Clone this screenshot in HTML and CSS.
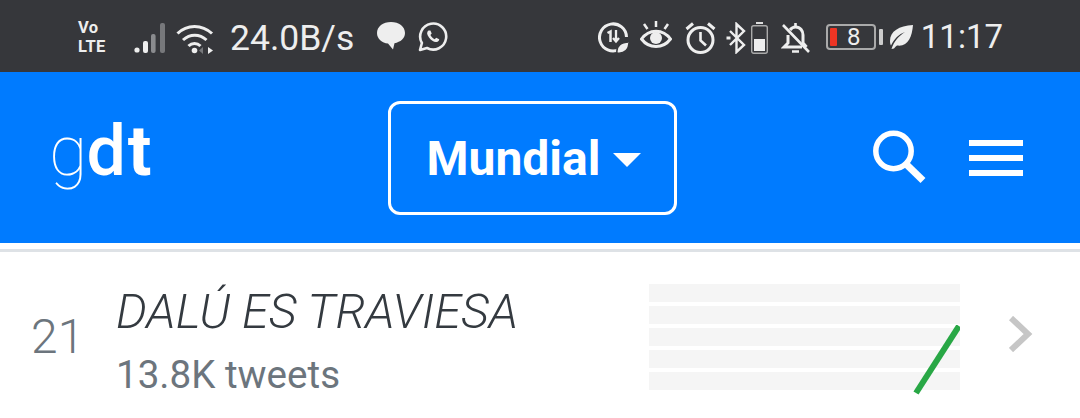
FILE: index.html
```html
<!DOCTYPE html>
<html lang="es">
<head>
<meta charset="utf-8">
<title>gdt</title>
<link rel="stylesheet" href="styles.css">
</head>
<body>
<div class="status">
  <div class="status-left">
    <div class="volte"><span>Vo</span><span>LTE</span></div>
    <svg class="i-signal" width="34" height="32" viewBox="0 0 34 32">
      <circle cx="3" cy="28" r="2.6" fill="#eee"/>
      <rect x="9" y="19" width="5" height="12" rx="2" fill="#eee"/>
      <rect x="17" y="12" width="4.6" height="19" rx="2" fill="#8a8b8e"/>
      <rect x="26" y="1" width="5" height="30" rx="2" fill="#77787b"/>
    </svg>
    <svg class="i-wifi" width="38" height="32" viewBox="0 0 38 32" fill="none" stroke="#eee" stroke-width="3">
      <path d="M1.5 10.5C11 1 26 1 36 10.500"/>
      <path d="M7 17C14 10.500 23.500 10.500 30.500 17"/>
      <path d="M12.500 23C16 19.500 21 19.500 24.500 23"/>
      <circle cx="18.500" cy="27.500" r="2.800" fill="#eee" stroke="none"/>
      <path d="M32 24v7l5-3.500z" fill="#eee" stroke="none"/>
      <path d="M27 24v7l-4-3.500z" fill="#77787b" stroke="none"/>
    </svg>
    <span class="speed">24.0B/s</span>
    <svg class="i-chat" width="28" height="28" viewBox="0 0 28 28">
      <path d="M14 0C6 0 0 4.500 0 11c0 6 5 10 11 10.500l5 6 1.500-6.300C23.500 20 28 16.500 28 11 28 4.500 22 0 14 0z" fill="#eee"/>
    </svg>
    <svg class="i-wa" width="30" height="30" viewBox="0 0 30 30" fill="none" stroke="#eee" stroke-width="2.600">
      <path d="M2 28l1.900-7A13 13 0 1 1 9 26z" stroke-linejoin="round"/>
      <path d="M10.500 8.500c-2 1.500-1.800 4 .5 7 2.300 3 5 4.800 7.500 4.500 1.700-.2 2.700-1.300 2.700-2.700l-3-1.500-1.500 1.500c-1.700-.7-3.500-2.500-4.300-4.300l1.300-1.500-1.300-3z" fill="#eee" stroke="none"/>
    </svg>
  </div>
  <div class="status-right">
    <svg class="i-saver" width="31" height="32" viewBox="0 0 31 32" fill="none" stroke="#eee" stroke-width="3">
      <path d="M21 27.500A13.500 13.500 0 1 1 28.500 15"/>
      <path d="M9.500 11l3-1.500V20" stroke-width="2.500"/>
      <path d="M18 8v11M15 16l3 3.500 3-3.500" stroke-width="2.300"/>
      <path d="M19 31c-1-7 4-11 12-11 0 7-4 12-12 11z" fill="#eee" stroke="#36373b" stroke-width="1.500"/>
    </svg>
    <svg class="i-eye" width="32" height="30" viewBox="0 0 32 30" fill="none" stroke="#eee" stroke-width="3">
      <path d="M1.500 18C9 7.500 23 7.500 30.500 18 23 28 9 28 1.500 18z"/>
      <circle cx="16" cy="17" r="6" fill="#eee" stroke="none"/>
      <path d="M16 0v6M4 3l3.500 5M28 3l-3.500 5" stroke-width="2.500"/>
    </svg>
    <svg class="i-alarm" width="31" height="32" viewBox="0 0 31 32" fill="none" stroke="#eee" stroke-width="3">
      <circle cx="15.500" cy="18" r="12.500"/>
      <path d="M15.500 10v8.500l5.500 5" stroke-width="2.600"/>
      <path d="M1.500 7L8 1.500M29.500 7L23 1.500"/>
    </svg>
    <svg class="i-bt" width="22" height="32" viewBox="0 0 22 32" fill="none" stroke="#eee" stroke-width="2.400">
      <path d="M4 9l14 14-7.500 7V2L18 9 4 23"/>
      <path d="M0.500 16h4" stroke-width="3"/>
    </svg>
    <svg class="i-bat" width="17" height="32" viewBox="0 0 17 32">
      <rect x="5" y="0" width="7" height="2" fill="#ddd"/>
      <rect x="0.700" y="3.700" width="15.600" height="27.600" rx="2" fill="none" stroke="#aaa" stroke-width="1.400"/>
      <rect x="3" y="17" width="11" height="12" fill="#eee"/>
    </svg>
    <svg class="i-bell" width="29" height="32" viewBox="0 0 29 32" fill="none" stroke="#eee" stroke-width="3">
      <path d="M9 8c1.500-2 3-3 5.500-3 5 0 7.500 4 7.500 8v8l3.500 4"/>
      <path d="M7 13v8l-4 4h18"/>
      <path d="M14.500 1v3M11 29.500h7M2 3l26 27" stroke-width="2.600"/>
    </svg>
    <div class="battery">
      <div class="battery-body"><span class="battery-fill"></span><span class="battery-num">8</span></div>
      <span class="battery-tip"></span>
    </div>
    <svg class="i-leaf" width="24" height="24" viewBox="0 0 24 24">
      <path d="M24 0C10 1 1 6 1 16c0 2 .5 3.500 1 4.500C5 14 10 9 16 7 10 11 5 16 2.500 24L5 23.500C6 22 7 21 8 20.500 19 22 23 12 24 0z" fill="#eee"/>
    </svg>
    <span class="clock">11:17</span>
  </div>
</div>

<header class="nav">
  <a class="brand"><span class="brand-g">g</span><span class="brand-d">d</span><span class="brand-t">t</span></a>
  <button class="select"><span>Mundial</span><span class="caret"></span></button>
  <div class="nav-actions">
    <svg class="i-search" width="54" height="54" viewBox="0 0 54 54" fill="none" stroke="#fff">
      <circle cx="20.500" cy="21" r="17.700" stroke-width="5.500"/>
      <path d="M33 34l17 16.500" stroke-width="7"/>
    </svg>
    <div class="burger"><span></span><span></span><span></span></div>
  </div>
</header>

<main class="list">
  <div class="row">
    <span class="rank">21</span>
    <div class="info">
      <div class="title">DALÚ ES TRAVIESA</div>
      <div class="count">13.8K tweets</div>
    </div>
    <div class="spark">
      <span></span><span></span><span></span><span></span><span></span>
      <svg class="spark-line" width="50" height="70" viewBox="0 0 50 70">
        <path d="M49 1L6 68" stroke="#28a745" stroke-width="6" fill="none"/>
      </svg>
    </div>
    <svg class="chevron" width="24" height="36" viewBox="0 0 24 36" fill="none">
      <path d="M2 2l17 16L2 34" stroke="#c6c6c6" stroke-width="6"/>
    </svg>
  </div>
</main>
</body>
</html>
```
FILE: styles.css
```css
* { box-sizing: border-box; }
html, body { margin: 0; padding: 0; }
body {
  width: 1080px;
  height: 418px;
  overflow: hidden;
  background: #fff;
  font-family: Roboto, "Liberation Sans", sans-serif;
}

/* Status bar */
.status {
  height: 72px;
  background: #36373b;
  color: #eee;
  display: flex;
  justify-content: space-between;
  align-items: center;
  padding: 0 77px 0 78px;
}
.status-left, .status-right { display: flex; align-items: center; }
.volte {
  display: flex;
  flex-direction: column;
  width: 28px;
  font-size: 16.500px;
  font-weight: 700;
  line-height: 19px;
  letter-spacing: .3px;
  margin-top: 2px;
  margin-right: 28px;
}
.i-signal { margin-top: 4px; margin-right: 8px; }
.i-wifi { margin-top: 6px; margin-right: 16px; }
.speed { font-size: 35.500px; line-height: 40px; margin-top: 4px; margin-right: 23px; }
.i-chat { margin-top: 0; margin-right: 13px; }
.i-wa { margin-top: 2px; }

.i-saver { margin-right: 11px; margin-top: 4px; }
.i-eye { margin-right: 13px; margin-top: 0; }
.i-alarm { margin-right: 10px; margin-top: 4px; }
.i-bt { margin-right: 3px; margin-top: 4px; }
.i-bat { margin-right: 13px; margin-top: 4px; }
.i-bell { margin-right: 16px; margin-top: 4px; }
.battery { display: flex; align-items: center; margin-top: 2px; margin-right: 6px; }
.battery-body {
  width: 50px;
  height: 26px;
  border: 2px solid #aaa;
  border-radius: 4px;
  display: flex;
  align-items: center;
  padding-left: 2px;
}
.battery-fill { width: 7px; height: 18px; background: #ee3524; border-radius: 1px; }
.battery-num {
  flex: 1;
  text-align: center;
  font-size: 24px;
  line-height: 24px;
  padding-right: 3px;
}
.battery-tip { width: 4px; height: 16px; background: #ccc; border-radius: 1px; margin-left: 3px; }
.i-leaf { margin-right: 8px; margin-top: 2px; }
.clock { font-size: 33px; line-height: 40px; margin-top: 2px; }

/* Nav */
.nav {
  height: 171px;
  background: #007bff;
  display: flex;
  align-items: flex-start;
  padding-left: 49px;
}
.brand {
  width: 339px;
  color: #fff;
  font-size: 70px;
  line-height: 82px;
  margin-top: 38px;
  display: flex;
}
.brand-g { font-weight: 100; }
.brand-d { font-weight: 500; margin-left: -1px; }
.brand-t { font-weight: 700; margin-left: 2px; }
.select {
  width: 289px;
  height: 114px;
  margin-top: 29px;
  border: 3px solid #fff;
  border-radius: 12px;
  background: transparent;
  color: #fff;
  font-family: inherit;
  font-size: 48px;
  font-weight: 700;
  display: flex;
  align-items: center;
  justify-content: center;
  gap: 13px;
  padding: 0 0 0 3px;
}
.caret {
  width: 0;
  height: 0;
  border-left: 14px solid transparent;
  border-right: 14px solid transparent;
  border-top: 14px solid #fff;
  margin-top: 4px;
}
.nav-actions {
  margin-left: 196px;
  margin-top: 58px;
  display: flex;
  align-items: flex-start;
  gap: 42px;
}
.burger {
  width: 54px;
  display: flex;
  flex-direction: column;
  gap: 9px;
  margin-top: 10px;
}
.burger span { display: block; height: 6px; background: #fff; }

/* List */
.list {
  margin-top: 6px;
  border-top: 3px solid #dee2e6;
}
.row {
  display: flex;
  align-items: flex-start;
  padding-left: 31px;
}
.rank {
  width: 85px;
  color: #6c757d;
  font-size: 48px;
  font-weight: 350;
  line-height: 56px;
  margin-top: 57px;
}
.info { width: 533px; margin-top: 32px; }
.title {
  color: #343a40;
  font-size: 48.500px;
  font-style: italic;
  font-weight: 350;
  line-height: 56px;
  white-space: nowrap;
}
.count {
  color: #6c757d;
  font-size: 38.600px;
  line-height: 46px;
  margin-top: 12px;
  white-space: nowrap;
}
.spark {
  width: 311px;
  margin-top: 32px;
  display: flex;
  flex-direction: column;
  gap: 4.300px;
  position: relative;
}
.spark > span { display: block; height: 17.800px; background: #f5f5f5; }
.spark-line { position: absolute; right: 0; top: 41px; }
.chevron { margin-left: 49px; margin-top: 64px; }
```
